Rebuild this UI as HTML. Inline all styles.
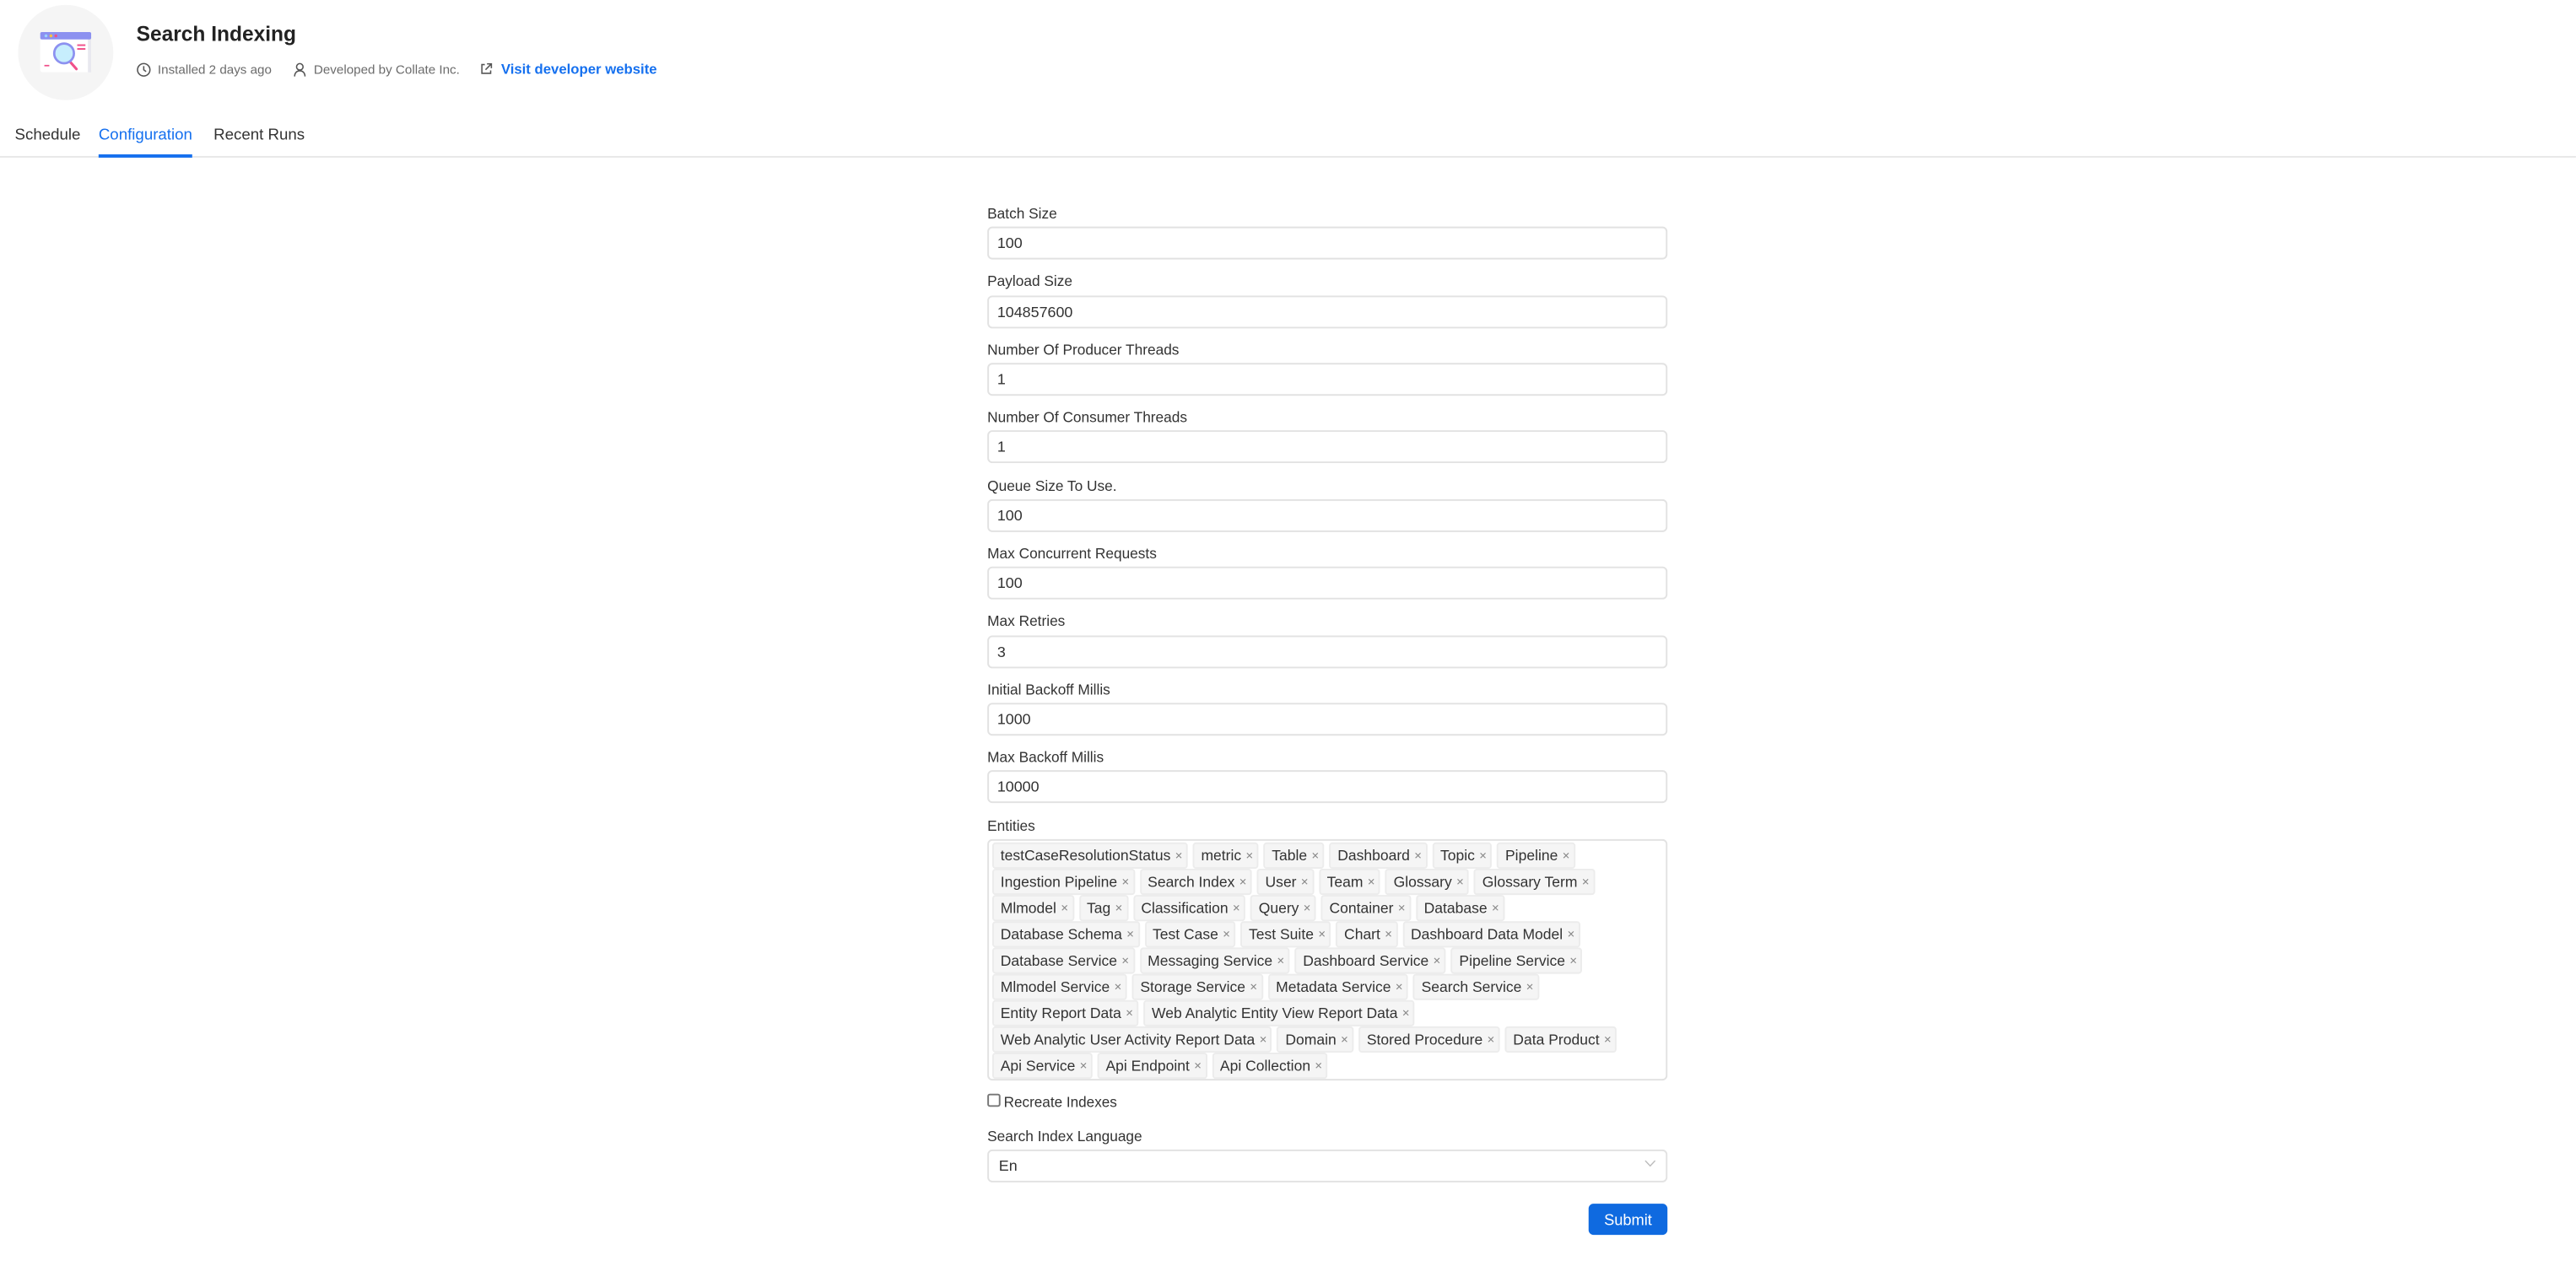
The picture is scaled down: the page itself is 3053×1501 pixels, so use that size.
<!DOCTYPE html>
<html><head><meta charset="utf-8"><style>
html,body{margin:0;padding:0;background:#fff;overflow:hidden}
body{width:3053px;height:1500px}
#w{position:absolute;left:0;top:0;width:1568px;height:771px;transform:scale(1.947);transform-origin:0 0;font-family:"Liberation Sans",sans-serif;color:#222}
.a{position:absolute;white-space:nowrap}
.lbl{font-size:8.9px;color:#333}
.inp{position:absolute;left:601px;width:412px;height:18px;border:1px solid #e2e2e2;border-radius:3px;font-size:9.2px;line-height:18px;box-sizing:content-box;color:#333}
.inp span{position:absolute;left:5px;top:0}
.row{position:absolute;left:604px;display:flex;gap:3px}
.tag{height:14px;line-height:14px;background:#f5f5f5;border:1px solid #ececec;border-radius:2px;font-size:9px;padding:0 2px 0 4px;color:#333;white-space:nowrap;box-sizing:content-box}
.tag i{font-style:normal;font-size:6px;color:#888;margin-left:2.5px;vertical-align:1px}
</style></head><body><div id="w">
<div class="a" style="left:11px;top:3px;width:58px;height:58px;border-radius:50%;background:#f5f5f5"></div>
<svg class="a" style="left:24px;top:19px" width="33" height="26" viewBox="0 0 33 26">
<rect x="0.5" y="0.5" width="31" height="24.5" rx="1.5" fill="#fff"/>
<rect x="29.5" y="4" width="2" height="21" fill="#e8e8ef"/>
<rect x="0.5" y="0.5" width="31" height="4.5" rx="1" fill="#8c91f0"/>
<circle cx="4" cy="2.8" r="0.9" fill="#9ad3ff"/><circle cx="7" cy="2.8" r="0.9" fill="#f5c242"/><circle cx="10" cy="2.8" r="0.9" fill="#f0508a"/>
<line x1="19" y1="19" x2="22.5" y2="23" stroke="#f0508a" stroke-width="1.6" stroke-linecap="round"/>
<circle cx="15" cy="13.5" r="6" fill="#c7eefd" stroke="#8c91f0" stroke-width="1.4"/>
<rect x="23" y="8" width="5" height="1" fill="#f0508a"/><rect x="23" y="10.3" width="5" height="1" fill="#f0508a"/>
<rect x="3" y="20.5" width="3" height="0.9" fill="#f0508a"/>
</svg>
<div class="a" style="left:83px;top:14px;font-size:12.6px;font-weight:700;color:#222">Search Indexing</div>
<svg class="a" style="left:83px;top:38px" width="9" height="9" viewBox="0 0 10 10"><circle cx="5" cy="5" r="4.2" fill="none" stroke="#555" stroke-width="0.9"/><path d="M5 2.5V5l1.6 1.2" fill="none" stroke="#555" stroke-width="0.9"/></svg>
<div class="a" style="left:96px;top:38px;font-size:7.8px;color:#6b6b6b">Installed 2 days ago</div>
<svg class="a" style="left:178px;top:38px" width="9" height="9" viewBox="0 0 10 10"><circle cx="5" cy="3" r="2.2" fill="none" stroke="#555" stroke-width="0.9"/><path d="M1.5 9.5c0-2.5 1.5-3.8 3.5-3.8s3.5 1.3 3.5 3.8" fill="none" stroke="#555" stroke-width="0.9"/></svg>
<div class="a" style="left:191px;top:38px;font-size:7.8px;color:#6b6b6b">Developed by Collate Inc.</div>
<svg class="a" style="left:292px;top:38px" width="8" height="8" viewBox="0 0 9 9"><path d="M3.5 1.5H1.5v6h6v-2M5 1h3v3M8 1L4 5" fill="none" stroke="#555" stroke-width="0.9"/></svg>
<div class="a" style="left:305px;top:37px;font-size:8.6px;font-weight:700;color:#1570ef">Visit developer website</div>
<div class="a" style="left:9px;top:77px;font-size:9.6px;color:#333">Schedule</div>
<div class="a" style="left:60px;top:77px;font-size:9.6px;color:#1570ef">Configuration</div>
<div class="a" style="left:130px;top:77px;font-size:9.6px;color:#333">Recent Runs</div>
<div class="a" style="left:0;top:95px;width:1568px;height:1px;background:#e8e8e8"></div>
<div class="a" style="left:60px;top:93.5px;width:57px;height:2px;background:#1570ef"></div>

<div class="a lbl" style="left:601px;top:125px">Batch Size</div><div class="inp" style="top:138px"><span>100</span></div>
<div class="a lbl" style="left:601px;top:166px">Payload Size</div><div class="inp" style="top:180px"><span>104857600</span></div>
<div class="a lbl" style="left:601px;top:208px">Number Of Producer Threads</div><div class="inp" style="top:221px"><span>1</span></div>
<div class="a lbl" style="left:601px;top:249px">Number Of Consumer Threads</div><div class="inp" style="top:262px"><span>1</span></div>
<div class="a lbl" style="left:601px;top:291px">Queue Size To Use.</div><div class="inp" style="top:304px"><span>100</span></div>
<div class="a lbl" style="left:601px;top:332px">Max Concurrent Requests</div><div class="inp" style="top:345px"><span>100</span></div>
<div class="a lbl" style="left:601px;top:373px">Max Retries</div><div class="inp" style="top:387px"><span>3</span></div>
<div class="a lbl" style="left:601px;top:415px">Initial Backoff Millis</div><div class="inp" style="top:428px"><span>1000</span></div>
<div class="a lbl" style="left:601px;top:456px">Max Backoff Millis</div><div class="inp" style="top:469px"><span>10000</span></div>
<div class="a lbl" style="left:601px;top:498px">Entities</div>
<div class="a" style="left:601px;top:511px;width:412px;height:145px;border:1px solid #e2e2e2;border-radius:3px"></div>
<div class="row" style="top:512.5px"><span class="tag">testCaseResolutionStatus<i>✕</i></span><span class="tag">metric<i>✕</i></span><span class="tag">Table<i>✕</i></span><span class="tag">Dashboard<i>✕</i></span><span class="tag">Topic<i>✕</i></span><span class="tag">Pipeline<i>✕</i></span></div>
<div class="row" style="top:528.5px"><span class="tag">Ingestion Pipeline<i>✕</i></span><span class="tag">Search Index<i>✕</i></span><span class="tag">User<i>✕</i></span><span class="tag">Team<i>✕</i></span><span class="tag">Glossary<i>✕</i></span><span class="tag">Glossary Term<i>✕</i></span></div>
<div class="row" style="top:544.5px"><span class="tag">Mlmodel<i>✕</i></span><span class="tag">Tag<i>✕</i></span><span class="tag">Classification<i>✕</i></span><span class="tag">Query<i>✕</i></span><span class="tag">Container<i>✕</i></span><span class="tag">Database<i>✕</i></span></div>
<div class="row" style="top:560.5px"><span class="tag">Database Schema<i>✕</i></span><span class="tag">Test Case<i>✕</i></span><span class="tag">Test Suite<i>✕</i></span><span class="tag">Chart<i>✕</i></span><span class="tag">Dashboard Data Model<i>✕</i></span></div>
<div class="row" style="top:576.5px"><span class="tag">Database Service<i>✕</i></span><span class="tag">Messaging Service<i>✕</i></span><span class="tag">Dashboard Service<i>✕</i></span><span class="tag">Pipeline Service<i>✕</i></span></div>
<div class="row" style="top:592.5px"><span class="tag">Mlmodel Service<i>✕</i></span><span class="tag">Storage Service<i>✕</i></span><span class="tag">Metadata Service<i>✕</i></span><span class="tag">Search Service<i>✕</i></span></div>
<div class="row" style="top:608.5px"><span class="tag">Entity Report Data<i>✕</i></span><span class="tag">Web Analytic Entity View Report Data<i>✕</i></span></div>
<div class="row" style="top:624.5px"><span class="tag">Web Analytic User Activity Report Data<i>✕</i></span><span class="tag">Domain<i>✕</i></span><span class="tag">Stored Procedure<i>✕</i></span><span class="tag">Data Product<i>✕</i></span></div>
<div class="row" style="top:640.5px"><span class="tag">Api Service<i>✕</i></span><span class="tag">Api Endpoint<i>✕</i></span><span class="tag">Api Collection<i>✕</i></span></div>
<div class="a" style="left:601px;top:666px;width:6px;height:6px;border:1px solid #777;border-radius:1.5px"></div>
<div class="a" style="left:611px;top:666px;font-size:8.8px;color:#333">Recreate Indexes</div>
<div class="a lbl" style="left:601px;top:687px">Search Index Language</div>
<div class="inp" style="top:700px"><span style="left:6px">En</span></div>
<svg class="a" style="left:1001px;top:706px" width="7" height="5" viewBox="0 0 7 5"><path d="M0.5 0.8L3.5 4 6.5 0.8" fill="none" stroke="#bbb" stroke-width="0.7"/></svg>
<div class="a" style="left:967px;top:733px;width:48px;height:19px;background:#0f6ae0;border-radius:3px;color:#fff;font-size:9.4px;text-align:center;line-height:19px">Submit</div>
</div></body></html>
